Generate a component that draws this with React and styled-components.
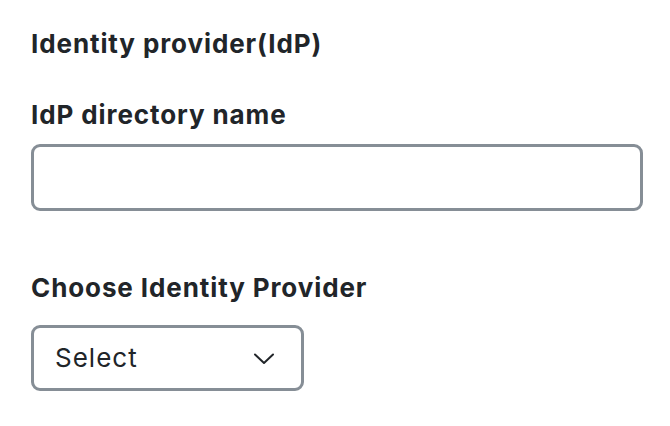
import React, {useState} from 'react'
import styled, {createGlobalStyle} from 'styled-components'

const GlobalStyle = createGlobalStyle`
    body {
        margin: 0;
        background: #ffffff;
        font-family: Inter, "Noto Sans", sans-serif;
        color: #212529;
    }
`

const Form = styled.form`
    display: flex;
    flex-direction: column;
    align-items: flex-start;
    padding: 28px 27px 0 31px;
`

const Heading = styled.h2`
    margin: 0 0 40px;
    font-size: 26px;
    line-height: 1.2;
    font-weight: 700;
    letter-spacing: 0.9px;
`

const Label = styled.label`
    display: block;
    margin: ${p => p.$top || 0}px 0 ${p => p.$gap}px;
    font-size: 26px;
    line-height: 1.2;
    font-weight: 700;
    letter-spacing: 0.9px;
`

const TextInput = styled.input`
    box-sizing: border-box;
    width: 100%;
    height: 67px;
    margin: 0;
    padding: 0 20px;
    border: 3px solid #868e96;
    border-radius: 9px;
    font: inherit;
    font-size: 26px;
    outline: none;
`

const SelectBox = styled.button`
    box-sizing: border-box;
    display: flex;
    align-items: center;
    justify-content: space-between;
    width: 273px;
    height: 66px;
    padding: 0 26px 0 21px;
    border: 3px solid #868e96;
    border-radius: 9px;
    background: #fff;
    font-family: inherit;
    font-size: 26px;
    letter-spacing: 1px;
    color: #212529;
    cursor: pointer;
`

const Chevron = () => (
    <svg width="22" height="14" viewBox="0 0 22 14" fill="none">
        <polyline points="2,3.5 11,12 20,3.5" stroke="#212529" strokeWidth="2" strokeLinecap="round" strokeLinejoin="round" />
    </svg>
)

const App = () => {
    const [name, setName] = useState('')

    return (
        <>
            <GlobalStyle />
            <Form onSubmit={e => e.preventDefault()}>
                <Heading>Identity provider(IdP)</Heading>
                <Label htmlFor="idp-name" $gap={14}>IdP directory name</Label>
                <TextInput id="idp-name" value={name} onChange={e => setName(e.target.value)} />
                <Label $top={61} $gap={21}>Choose Identity Provider</Label>
                <SelectBox type="button">
                    <span>Select</span>
                    <Chevron />
                </SelectBox>
            </Form>
        </>
    )
}

export default App
